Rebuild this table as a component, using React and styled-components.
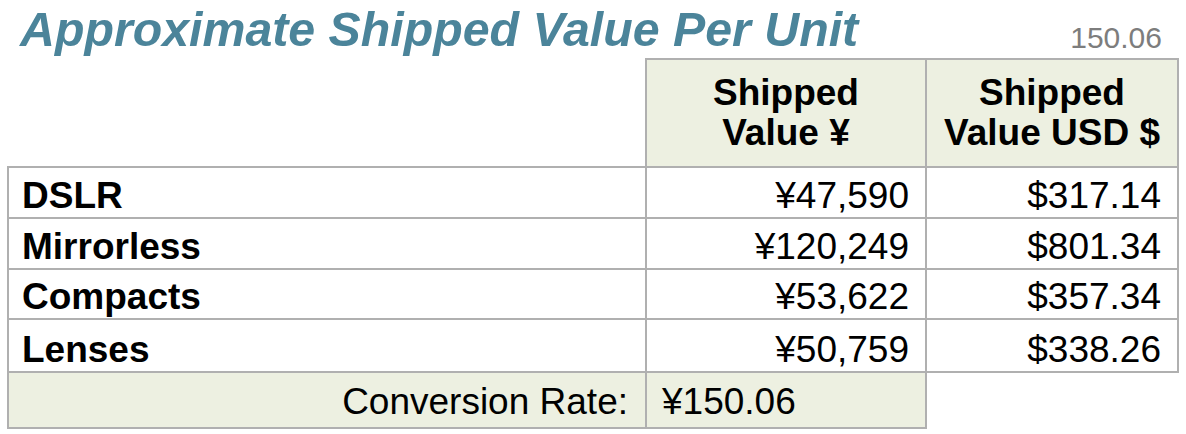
import React from "react";
import styled, { createGlobalStyle } from "styled-components";

const Global = createGlobalStyle`
  html, body { margin: 0; padding: 0; background: #ffffff; }
  body { font-family: "Liberation Sans", Arial, Helvetica, sans-serif; color: #000; }
`;

const Page = styled.div`
  width: 1186px;
  height: 434px;
  padding: 0 0 0 7px;
  box-sizing: border-box;
  display: flex;
  flex-direction: column;
`;

const TitleBar = styled.div`
  height: 58px;
  display: flex;
  justify-content: space-between;
  align-items: flex-start;
  width: 1170px;
`;

const Title = styled.h1`
  margin: 0;
  padding: 5px 0 0 13px;
  font-size: 48.3px;
  line-height: 48px;
  font-weight: 700;
  font-style: italic;
  color: #4b849a;
  white-space: nowrap;
`;

const Rate = styled.div`
  padding: 23px 15px 0 0;
  font-size: 30px;
  line-height: 30px;
  color: #7d7d7d;
`;

const Table = styled.table`
  border-collapse: collapse;
  table-layout: fixed;
  width: 1170px;
  font-size: 37px;
`;

const Row = styled.tr`
  height: ${(p) => p.$h}px;
`;

const line = "2px solid #b0b0b0";

const HeadCell = styled.th`
  padding: 0 10px;
  font-weight: 700;
  line-height: 40px;
  text-align: center;
  vertical-align: middle;
  background: ${(p) => (p.$blank ? "transparent" : "#edf0e1")};
  border: ${(p) => (p.$blank ? "none" : line)};
`;

const Cell = styled.td`
  padding: 0 16px 1px ${(p) => (p.$bold ? 13 : 16)}px;
  line-height: 40px;
  vertical-align: bottom;
  white-space: nowrap;
  font-weight: ${(p) => (p.$bold ? 700 : 400)};
  text-align: ${(p) => p.$align || "left"};
  border: ${line};
`;

const FootCell = styled.td`
  padding: 0 17px 5px 15px;
  line-height: 40px;
  vertical-align: bottom;
  white-space: nowrap;
  text-align: ${(p) => p.$align || "left"};
  background: ${(p) => (p.$empty ? "transparent" : "#edf0e1")};
  border: ${(p) => (p.$empty ? "none" : line)};
`;

const rows = [
  { name: "DSLR", yen: "¥47,590", usd: "$317.14", h: 51 },
  { name: "Mirrorless", yen: "¥120,249", usd: "$801.34", h: 51 },
  { name: "Compacts", yen: "¥53,622", usd: "$357.34", h: 50 },
  { name: "Lenses", yen: "¥50,759", usd: "$338.26", h: 53 },
];

export default function App() {
  return (
    <>
      <Global />
      <Page>
        <TitleBar>
          <Title>Approximate Shipped Value Per Unit</Title>
          <Rate>150.06</Rate>
        </TitleBar>
        <Table>
          <colgroup>
            <col style={{ width: 638 }} />
            <col style={{ width: 280 }} />
            <col style={{ width: 252 }} />
          </colgroup>
          <thead>
            <Row $h={108}>
              <HeadCell $blank />
              <HeadCell>
                Shipped
                <br />
                Value ¥
              </HeadCell>
              <HeadCell>
                Shipped
                <br />
                Value USD $
              </HeadCell>
            </Row>
          </thead>
          <tbody>
            {rows.map((r) => (
              <Row key={r.name} $h={r.h}>
                <Cell $bold>{r.name}</Cell>
                <Cell $align="right">{r.yen}</Cell>
                <Cell $align="right">{r.usd}</Cell>
              </Row>
            ))}
            <Row $h={56}>
              <FootCell $align="right">Conversion Rate:</FootCell>
              <FootCell>¥150.06</FootCell>
              <FootCell $empty />
            </Row>
          </tbody>
        </Table>
      </Page>
    </>
  );
}
